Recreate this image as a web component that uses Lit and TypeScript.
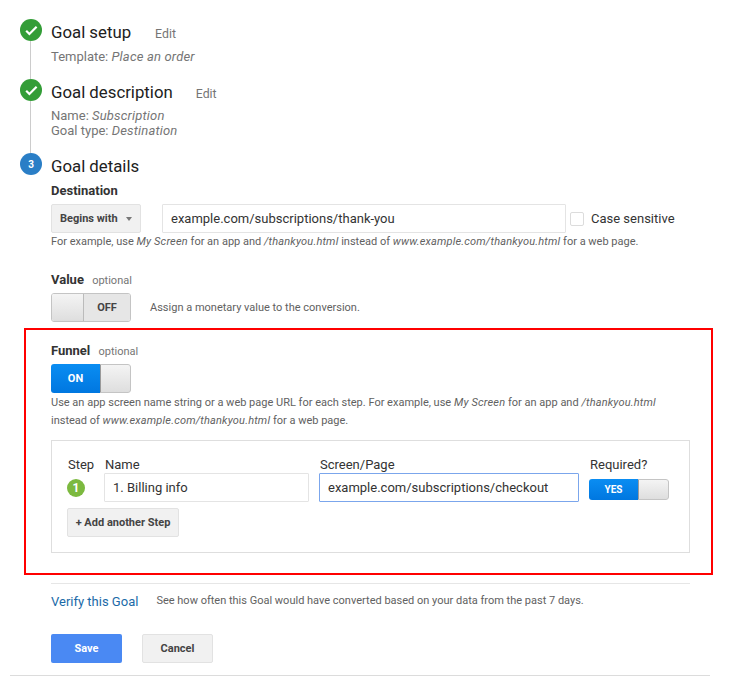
import {LitElement, html, css, svg} from 'lit';
import {customElement} from 'lit/decorators.js';

const check = svg`<path d="M6.2 11.8l3.2 3.2 7.2-7.2" fill="none" stroke="#fff" stroke-width="2.2"/>`;

@customElement('app-root')
export class AppRoot extends LitElement {
  static styles = css`
    :host {
      display: block;
      width: 731px;
      height: 676px;
      overflow: hidden;
      box-sizing: border-box;
      padding-top: 19px;
      background: #fff;
      font-family: Roboto, sans-serif;
      font-size: 13px;
      color: #212121;
    }
    em { font-style: italic; letter-spacing: .18px; }
    .step {
      display: flex;
      gap: 9px;
      padding-left: 20px;
    }
    .s1 { height: 60px; }
    .s2 { height: 74px; }
    .s3 { height: 22px; }
    .body { padding-top: 2px; }
    .rail {
      width: 22px;
      display: flex;
      flex-direction: column;
      align-items: center;
    }
    .rail i {
      flex: 1;
      width: 1px;
      margin-right: 1px;
      background: #ccc;
    }
    .dot {
      width: 22px;
      height: 22px;
      flex: none;
      border-radius: 50%;
      background: #339d37;
      color: #fff;
      display: flex;
      align-items: center;
      justify-content: center;
      font-size: 10px;
      font-weight: 700;
    }
    .dot.blue { background: #2a7ec6; }
    .dot svg { width: 22px; height: 22px; }
    .title {
      display: flex;
      align-items: baseline;
      font-size: 16.8px;
      line-height: 22px;
      white-space: nowrap;
    }
    .title a {
      font-size: 12.3px;
      color: #757575;
    }
    .s1 .title a { margin-left: 24px; }
    .s2 .title a { margin-left: 23px; }
    .sub {
      color: #757575;
      font-size: 13px;
      line-height: 15px;
      margin-top: 4px;
    }
    .s2 .sub { margin-top: 3px; }
    .sec { padding-left: 51px; }
    .label {
      font-weight: 700;
      color: #333;
      line-height: 16px;
    }
    .label small {
      font-weight: 400;
      font-size: 11px;
      color: #757575;
      margin-left: 5px;
    }
    .dest { margin-top: 8px; }
    .row {
      display: flex;
      align-items: center;
    }
    .dest-row { margin-top: 5px; }
    .select {
      width: 90px;
      height: 29px;
      box-sizing: border-box;
      display: flex;
      align-items: center;
      padding-left: 8px;
      background: #f1f1f1;
      border: 1px solid #e2e2e2;
      border-radius: 2px;
      font-size: 11px;
      font-weight: 700;
      color: #444;
      margin-right: 21px;
    }
    .select b {
      width: 0;
      height: 0;
      margin-left: 8px;
      border: 3.5px solid transparent;
      border-top: 4px solid #777;
      border-bottom: 0;
    }
    input {
      box-sizing: border-box;
      height: 29px;
      padding: 0 8px;
      border: 1px solid #e4e4e4;
      border-radius: 1px;
      outline: none;
      font-family: Roboto, sans-serif;
      font-size: 13px;
      color: #333;
    }
    .dest-input { width: 404px; }
    .cb {
      width: 12px;
      height: 12px;
      margin: 0 7px 0 4px;
      border: 1px solid #dcdcdc;
      border-radius: 2px;
    }
    .case { font-size: 13px; color: #333; }
    .help {
      font-size: 11px;
      color: #616161;
      line-height: 18px;
    }
    .dest .help { line-height: 17px; }
    .value { margin-top: 22px; }
    .toggle {
      display: flex;
      width: 80px;
      height: 29px;
      box-sizing: border-box;
      margin-top: 4px;
      border-radius: 3px;
      border: 1px solid #c4c4c4;
      overflow: hidden;
      font-size: 11px;
      font-weight: 700;
    }
    .toggle span {
      display: flex;
      align-items: center;
      justify-content: center;
    }
    .knob {
      width: 31px;
      flex: none;
      background: linear-gradient(#f4f4f4, #dedede);
    }
    .off {
      flex: 1;
      color: #444;
      background: #e6e6e6;
      border-left: 1px solid #bbb;
    }
    .on {
      flex: 1;
      color: #fff;
      background: linear-gradient(#0a8df2, #0077e0);
    }
    .toggle.active { border: 0; }
    .toggle.active .knob {
      border: 1px solid #c4c4c4;
      border-left-color: #999;
      border-radius: 0 3px 3px 0;
      box-sizing: border-box;
    }
    .value-row { gap: 19px; }
    .value-row .help { margin-top: 4px; }
    .funnel {
      margin: 6px 0 0 24px;
      width: 689px;
      height: 247px;
      box-sizing: border-box;
      border: 2px solid #f00;
      padding: 13px 0 0 25px;
    }
    .funnel > .help { padding-top: 1px; }
    .steps {
      width: 639px;
      height: 113px;
      box-sizing: border-box;
      margin-top: 10px;
      border: 1px solid #dedede;
      padding: 16px 16px 0;
      display: grid;
      grid-template-columns: 36px 215px 270px 1fr;
      grid-template-rows: 16px 29px;
      color: #333;
      line-height: 16px;
    }
    .steps .focused { border-color: #7ba6ec; width: 260px; }
    .steps .name { width: 205px; }
    .head { font-size: 13px; }
    .head.in { padding-left: 1px; }
    .badge {
      width: 18px;
      height: 18px;
      margin-left: -1px;
      border-radius: 50%;
      background: #7cb93f;
      color: #fff;
      display: flex;
      align-items: center;
      justify-content: center;
      font-size: 12px;
      font-weight: 700;
      align-self: center;
    }
    .steps .toggle {
      height: 21px;
      margin-top: 6px;
      font-size: 10px;
    }
    .add {
      width: 112px;
      height: 29px;
      box-sizing: border-box;
      margin: 6px 0 0 -1px;
      grid-column: 1 / span 3;
      display: flex;
      align-items: center;
      justify-content: center;
      background: #f1f1f1;
      border: 1px solid #e2e2e2;
      border-radius: 2px;
      font-size: 11px;
      font-weight: 700;
      color: #444;
    }
    .verify {
      margin: 8px 0 0 51px;
      width: 639px;
      border-top: 1px solid #e6e6e6;
      display: flex;
      align-items: center;
      height: 34px;
      gap: 18px;
    }
    .verify a { color: #1a6aa8; font-size: 13px; }
    .verify .help { line-height: 16px; }
    .actions {
      display: flex;
      gap: 20px;
      margin: 16px 0 0 51px;
    }
    .btn {
      width: 71px;
      height: 29px;
      box-sizing: border-box;
      display: flex;
      align-items: center;
      justify-content: center;
      border-radius: 2px;
      font-size: 11px;
      font-weight: 700;
    }
    .save { background: #4a89f3; color: #fff; }
    .cancel { background: #f1f1f1; border: 1px solid #e2e2e2; color: #444; }
    .bottom {
      margin: 12px 0 0 10px;
      width: 700px;
      border-top: 1px solid #dcdcdc;
    }
  `;

  render() {
    return html`
      <div class="step s1">
        <div class="rail"><div class="dot"><svg viewBox="0 0 22 22">${check}</svg></div><i></i></div>
        <div class="body">
          <div class="title">Goal setup<a>Edit</a></div>
          <div class="sub">Template: <em>Place an order</em></div>
        </div>
      </div>
      <div class="step s2">
        <div class="rail"><div class="dot"><svg viewBox="0 0 22 22">${check}</svg></div><i></i></div>
        <div class="body">
          <div class="title">Goal description<a>Edit</a></div>
          <div class="sub">Name: <em>Subscription</em><br />Goal type: <em>Destination</em></div>
        </div>
      </div>
      <div class="step s3">
        <div class="rail"><div class="dot blue">3</div></div>
        <div class="body"><div class="title">Goal details</div></div>
      </div>

      <div class="sec dest">
        <div class="label">Destination</div>
        <div class="row dest-row">
          <div class="select">Begins with<b></b></div>
          <input class="dest-input" value="example.com/subscriptions/thank-you" />
          <div class="cb"></div>
          <span class="case">Case sensitive</span>
        </div>
        <div class="help">
          For example, use <em>My Screen</em> for an app and <em>/thankyou.html</em>
          instead of <em>www.example.com/thankyou.html</em> for a web page.
        </div>
      </div>

      <div class="sec value">
        <div class="label">Value <small>optional</small></div>
        <div class="row value-row">
          <div class="toggle"><span class="knob"></span><span class="off">OFF</span></div>
          <div class="help">Assign a monetary value to the conversion.</div>
        </div>
      </div>

      <div class="funnel">
        <div class="label">Funnel <small>optional</small></div>
        <div class="toggle active"><span class="on">ON</span><span class="knob"></span></div>
        <div class="help">
          Use an app screen name string or a web page URL for each step. For example, use
          <em>My Screen</em> for an app and <em>/thankyou.html</em><br />
          instead of <em>www.example.com/thankyou.html</em> for a web page.
        </div>
        <div class="steps">
          <div class="head">Step</div>
          <div class="head in">Name</div>
          <div class="head in">Screen/Page</div>
          <div class="head in">Required?</div>
          <div class="badge">1</div>
          <input class="name" value="1. Billing info" />
          <input class="focused" value="example.com/subscriptions/checkout" />
          <div class="toggle active"><span class="on">YES</span><span class="knob"></span></div>
          <div class="add">+ Add another Step</div>
        </div>
      </div>

      <div class="verify">
        <a>Verify this Goal</a>
        <div class="help">See how often this Goal would have converted based on your data from the past 7 days.</div>
      </div>
      <div class="actions">
        <div class="btn save">Save</div>
        <div class="btn cancel">Cancel</div>
      </div>
      <div class="bottom"></div>
    `;
  }
}
